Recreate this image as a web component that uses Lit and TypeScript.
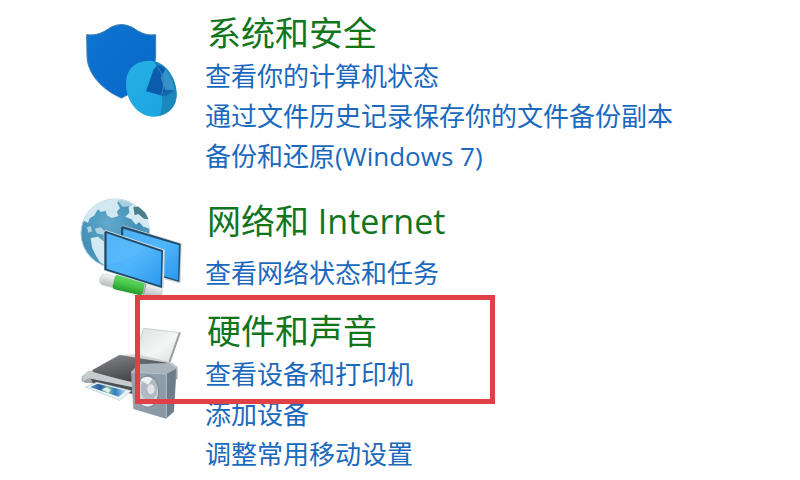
import { LitElement, html, css, nothing } from "lit";
import { customElement } from "lit/decorators.js";
import { classMap } from "lit/directives/class-map.js";

const securityIcon = html`
  <svg class="icon" viewBox="30 0 312 330" width="104" height="110" aria-hidden="true">
    <defs>
      <linearGradient id="shield" x1="0" y1="0" x2="1" y2="1">
        <stop offset="0" stop-color="#0f74d2" /><stop offset="1" stop-color="#0667c6" />
      </linearGradient>
      <linearGradient id="disc" x1="0" y1="0" x2="1" y2="1">
        <stop offset="0" stop-color="#27b0e6" /><stop offset="1" stop-color="#18a4e0" />
      </linearGradient>
    </defs>
    <path d="M50 74C84 78 103 65 122 52Q154 35 187 52C208 66 225 78 257 74V136C257 190 211 239 154 264C96 239 51 191 51 136Z"
      fill="url(#shield)" stroke="#3f7fae" stroke-width="3" />
    <path d="M238 152C284 154 320 204 320 254C319 288 300 309 268 318C214 331 168 280 168 222C168 178 194 153 238 152Z"
      fill="url(#disc)" />
    <path d="M250 153C291 160 320 207 320 254C319 288 300 309 268 318Q281 290 275 257L262 170Z" fill="#1a88bd" />
    <path d="M250 180L262 166Q276 167 286 177L273 205L303 246L276 257L228 244Z" fill="#0c5cae" />
    <path d="M273 205L286 177Q306 199 313 239L286 240Z" fill="#3592c6" />
    <path d="M262 170Q291 205 275 257" fill="none" stroke="#3d86c0" stroke-width="3" />
    <path d="M276 257L286 240L312 241Q304 252 290 257Z" fill="#126aa9" />
  </svg>`;

const networkIcon = html`
  <svg class="icon" viewBox="30 24 312 300" width="104" height="100" aria-hidden="true">
    <defs>
      <radialGradient id="globe" cx=".4" cy=".35" r=".7">
        <stop offset="0" stop-color="#62a9cd" /><stop offset=".65" stop-color="#4390b6" /><stop offset="1" stop-color="#5c9fbe" />
      </radialGradient>
      <linearGradient id="screen" x1="0" y1="0" x2="1" y2="1">
        <stop offset="0" stop-color="#4cb0f7" /><stop offset=".5" stop-color="#50b6fb" /><stop offset="1" stop-color="#2d98ee" />
      </linearGradient>
      <linearGradient id="cable" x1="0" y1="0" x2="0" y2="1">
        <stop offset="0" stop-color="#63d863" /><stop offset=".5" stop-color="#48c448" /><stop offset="1" stop-color="#239a2c" />
      </linearGradient>
      <linearGradient id="plug" x1="0" y1="0" x2="0" y2="1">
        <stop offset="0" stop-color="#f5f6f6" /><stop offset="1" stop-color="#b4babd" />
      </linearGradient>
      <clipPath id="globe-clip"><circle cx="136" cy="130" r="104" /></clipPath>
    </defs>
    <circle cx="136" cy="130" r="103" fill="url(#globe)" stroke="#a9cedd" stroke-width="3" />
    <g clip-path="url(#globe-clip)" fill="#d3e9f2">
      <path d="M40 92Q60 45 105 24L148 22L142 38L150 54L140 66L146 78L125 84L111 76L107 62L92 66L84 58L72 77L60 84L54 98Z" />
      <path d="M130 22L165 22L192 36L180 49L158 50L148 38Z" opacity=".7" />
      <path d="M176 52L196 35L222 57L240 91L245 118L220 110L207 96L198 104L184 88L166 80L178 68Z" />
      <path d="M62 144L84 140L106 158V228L90 216Q72 190 66 172Z" />
      <path d="M74 116L92 112L106 126L98 134L80 130Z" opacity=".7" />
      <path d="M50 112L62 108L66 124L56 128Z" opacity=".7" />
    </g>
    <path d="M190 50L206 50L226 68L236 88L222 86L205 72L194 76Z" fill="#4a7f8a" />
    <path d="M154 110L158 106L335 160L332 278L326 280L153 230Z" fill="#cbd5d9" />
    <path d="M153 112L158 108L332 161L328 276L153 226Z" fill="#234e6b" />
    <path d="M160 116L327 166L324 271L160 222Z" fill="url(#screen)" />
    <g transform="rotate(13 180 285)">
      <rect x="88" y="270" width="192" height="34" rx="14" fill="url(#plug)" stroke="#cdd2d4" stroke-width="2" />
      <rect x="130" y="264" width="93" height="44" rx="10" fill="url(#cable)" />
      <path d="M226 269V305" stroke="#8d9a98" stroke-width="3" />
    </g>
    <path d="M101 123L107 120L284 179L282 291L275 296L102 242Z" fill="#d7dfe2" />
    <path d="M103 125L108 123L279 181L276 294L103 240Z" fill="#204c69" />
    <path d="M110 130L274 185L272 287L110 236Z" fill="url(#screen)" />
    <path d="M110 130L229 170Q190 210 110 225Z" fill="#78cafc" opacity=".2" />
  </svg>`;

const printerIcon = html`
  <svg class="icon" viewBox="30 -6 312 345" width="104" height="115" aria-hidden="true">
    <defs>
      <linearGradient id="paper" x1="0" y1="0" x2="1" y2="1">
        <stop offset="0" stop-color="#dcdedf" /><stop offset=".55" stop-color="#f4f5f5" /><stop offset="1" stop-color="#d9dcdd" />
      </linearGradient>
      <linearGradient id="lid" x1="0" y1="0" x2=".6" y2="1">
        <stop offset="0" stop-color="#85878a" /><stop offset="1" stop-color="#3d4043" />
      </linearGradient>
      <linearGradient id="body" x1="0" y1="0" x2="0" y2="1">
        <stop offset="0" stop-color="#d9dddf" /><stop offset="1" stop-color="#8b949a" />
      </linearGradient>
      <linearGradient id="photo" x1="0" y1="0" x2="1" y2="0">
        <stop offset="0" stop-color="#4b9ad2" /><stop offset=".3" stop-color="#285c9c" /><stop offset=".5" stop-color="#74b996" /><stop offset=".7" stop-color="#307cc4" /><stop offset="1" stop-color="#c5e5f4" />
      </linearGradient>
      <linearGradient id="speaker" x1="0" y1="0" x2="1" y2="1">
        <stop offset="0" stop-color="#98a6b3" /><stop offset="1" stop-color="#8795a2" />
      </linearGradient>
    </defs>
    <path d="M193 140L221 55L332 68L296 163Z" fill="url(#paper)" stroke="#b9bcbe" stroke-width="2" />
    <path d="M326 68L332 68L300 161L294 159Z" fill="#9da0a2" />
    <path d="M35 199L145 135L202 132L307 158L323 171V207L193 240L126 224L45 218L35 213Z" fill="url(#body)" />
    <path d="M68 180L149 135L292 158L296 169L192 217L71 193Z" fill="url(#lid)" />
    <path d="M37 199L55 182L188 218V233L56 204L40 213Z" fill="#c7cccf" />
    <path d="M62 206L188 232V252L72 225Z" fill="#4a5054" />
    <path d="M46 231L80 217L184 242L149 271Z" fill="#ecf5f8" stroke="#b5c5cb" stroke-width="2" />
    <path d="M60 231L83 221L169 242L146 260Z" fill="url(#photo)" />
    <path d="M94 239L110 231L123 239L116 249Z" fill="#dceee5" />
    <path d="M183 185L206 162L295 159L320 178L312 305L288 326L190 297Z" fill="url(#speaker)" />
    <path d="M289 190L318 176L311 304L288 325Z" fill="#6d7d89" />
    <path d="M184 186L207 163L295 160L318 176L289 192Z" fill="#a9b3bc" />
    <path d="M184 186L289 192V323" fill="none" stroke="#b4c0ca" stroke-width="3" />
    <ellipse cx="234" cy="244" rx="34" ry="49" fill="#7d8c98" />
    <ellipse cx="233" cy="245" rx="31" ry="45" fill="#ced3d8" />
    <ellipse cx="237" cy="237" rx="25" ry="34" fill="#b0bac2" />
    <ellipse cx="243" cy="238" rx="11" ry="15" fill="#e1e4e7" />
    <path d="M211 210Q228 193 247 206L235 224Z" fill="#eef0f1" />
    <path d="M207 277Q235 302 260 274L244 266Z" fill="#e7eaec" />
  </svg>`;

const categories = [
  {
    icon: securityIcon,
    title: "系统和安全",
    links: ["查看你的计算机状态", "通过文件历史记录保存你的文件备份副本", "备份和还原(Windows 7)"],
  },
  { icon: networkIcon, title: "网络和 Internet", links: ["查看网络状态和任务"], spaced: true },
  {
    icon: printerIcon,
    title: "硬件和声音",
    links: ["查看设备和打印机", "添加设备", "调整常用移动设置"],
    marked: true,
  },
];

@customElement("app-root")
export class AppRoot extends LitElement {
  static styles = css`
    :host {
      display: block;
      min-height: 100vh;
      background: #fefefe;
      font-family: "Open Sans", "Noto Sans CJK SC", sans-serif;
    }
    .panel {
      display: flex;
      flex-direction: column;
      padding: 10px 16px 4px 80px;
    }
    .category {
      position: relative;
      display: grid;
      grid-template-columns: 104px minmax(0, 1fr);
      column-gap: 21px;
      align-items: start;
    }
    .spaced {
      margin: 22px 0 10px;
    }
    .icon {
      display: block;
    }
    .title {
      margin: 0;
      padding-left: 2px;
      font-size: 34px;
      line-height: 46px;
      font-weight: 400;
    }
    .spaced .title {
      margin-bottom: 9px;
    }
    .links {
      margin: 0;
      padding: 0;
      list-style: none;
      font-size: 26px;
      line-height: 40px;
    }
    a {
      color: #1b69be;
      text-decoration: none;
    }
    .title a {
      color: #10751b;
    }
    a:hover {
      text-decoration: underline;
    }
    .marker {
      position: absolute;
      top: -13px;
      left: 55px;
      box-sizing: border-box;
      width: 360px;
      height: 109px;
      border: 5px solid #e04146;
      pointer-events: none;
    }
  `;

  render() {
    return html`
      <main class="panel">
        ${categories.map(
          (c) => html`
            <section class=${classMap({ category: true, spaced: !!c.spaced })}>
              ${c.icon}
              <div>
                <h2 class="title"><a href="#">${c.title}</a></h2>
                <ul class="links">
                  ${c.links.map((l) => html`<li><a href="#">${l}</a></li>`)}
                </ul>
              </div>
              ${c.marked ? html`<div class="marker"></div>` : nothing}
            </section>
          `,
        )}
      </main>
    `;
  }
}
